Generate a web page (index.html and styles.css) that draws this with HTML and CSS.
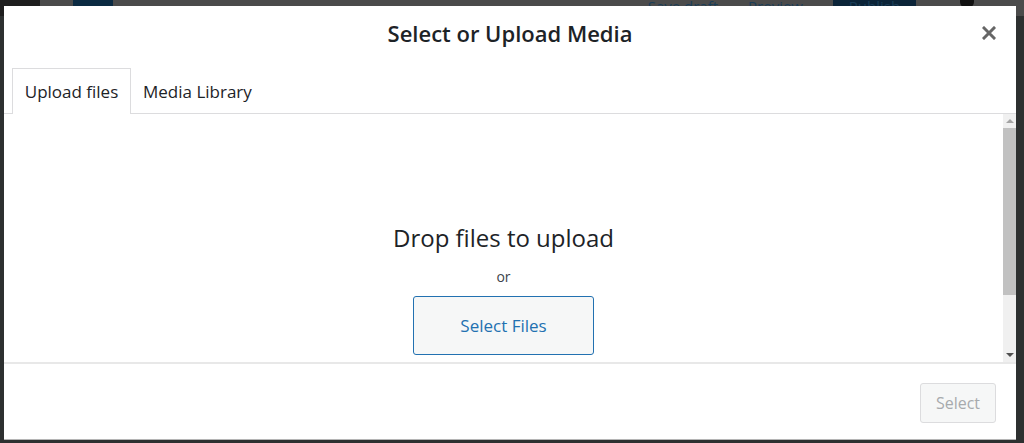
FILE: index.html
```html
<!DOCTYPE html>
<html lang="en">
<head>
<meta charset="utf-8">
<title>Select or Upload Media</title>
<link rel="stylesheet" href="styles.css">
</head>
<body>
<div class="admin-bar">
  <div class="ab-logo"></div>
  <div class="ab-block"></div>
  <div class="ab-spacer"></div>
  <span class="ab-link">Save draft</span>
  <span class="ab-link">Preview</span>
  <span class="ab-publish">Publish</span>
  <span class="ab-gear"></span>
</div>
<div class="modal">
  <div class="modal-title">
    <h1>Select or Upload Media</h1>
    <button class="close" aria-label="Close">
      <svg width="14" height="14" viewBox="0 0 14 14"><path d="M2 2L12 12M12 2L2 12" stroke="#666" stroke-width="3" stroke-linecap="square"/></svg>
    </button>
  </div>
  <div class="tabs">
    <div class="tab active">Upload files</div>
    <div class="tab">Media Library</div>
  </div>
  <div class="content">
    <div class="upload">
      <h2 class="drop">Drop files to upload</h2>
      <p class="or">or</p>
      <button class="select-files">Select Files</button>
    </div>
    <div class="scrollbar">
      <div class="arrow up"></div>
      <div class="thumb"></div>
      <div class="track"></div>
      <div class="arrow down"></div>
    </div>
  </div>
  <div class="footer">
    <button class="select-btn" disabled>Select</button>
  </div>
</div>
</body>
</html>
```
FILE: styles.css
```css
html, body {
  margin: 0;
  height: 100%;
}
body {
  background: #2d3030;
  font-family: "Open Sans", "Noto Sans", sans-serif;
  overflow: hidden;
  position: relative;
}
.admin-bar {
  height: 16px;
  background: #4b4b4b;
  display: flex;
  align-items: flex-start;
  overflow: hidden;
}
.ab-logo {
  width: 40px;
  height: 16px;
  background: #1e1e1e;
}
.ab-block {
  width: 40px;
  height: 16px;
  margin-left: 33px;
  background: #0b2a42;
}
.ab-spacer { flex: 1; }
.ab-link {
  color: #1a3d57;
  font-size: 15px;
  line-height: 12px;
  margin-right: 30px;
}
.ab-publish {
  background: #0b2438;
  color: #1a3d57;
  font-size: 15px;
  line-height: 12px;
  width: 83px;
  height: 16px;
  text-align: center;
  margin-right: 44px;
}
.ab-gear {
  width: 14px;
  height: 8px;
  background: #111;
  border-radius: 0 0 6px 6px;
  margin-right: 50px;
}
.modal {
  position: absolute;
  left: 4px;
  top: 6px;
  width: 1012px;
  height: 433px;
  background: #fff;
  border-bottom: 1px solid #b5b5b5;
  display: flex;
  flex-direction: column;
}
.modal-title {
  height: 62px;
  box-sizing: border-box;
  padding-bottom: 8px;
  display: flex;
  align-items: center;
  justify-content: center;
  position: relative;
}
.modal-title h1 {
  margin: 0;
  font-size: 22px;
  font-weight: 600;
  color: #1d2327;
}
.close {
  position: absolute;
  right: 20px;
  top: 20px;
  width: 14px;
  height: 14px;
  padding: 0;
  border: 0;
  background: none;
  display: flex;
}
.tabs {
  display: flex;
  padding: 0 8px;
  height: 45px;
  border-bottom: 1px solid #dcdcde;
}
.tab {
  font-size: 17px;
  color: #1d2327;
  padding: 0 12px 0 11px;
  display: flex;
  align-items: center;
  border: 1px solid transparent;
  border-bottom: 0;
  margin-bottom: -1px;
}
.tab.active {
  border-color: #dcdcde;
  background: #fff;
  padding: 0;
  width: 117px;
  justify-content: center;
}
.content {
  height: 248px;
  display: flex;
  border-bottom: 2px solid #e8e8e8;
}
.upload {
  flex: 1;
  display: flex;
  flex-direction: column;
  align-items: center;
  padding-top: 107px;
}
.drop {
  margin: 0;
  font-size: 24px;
  font-weight: 400;
  line-height: 34px;
  color: #1d2327;
}
.or {
  margin: 13px 0 0;
  font-size: 14px;
  line-height: 18px;
  color: #3c434a;
}
.select-files {
  margin-top: 10px;
  width: 181px;
  height: 59px;
  border: 1px solid #2271b1;
  border-radius: 3px;
  background: #f6f7f7;
  color: #2271b1;
  font-family: inherit;
  font-size: 17px;
  flex-shrink: 0;
}
.scrollbar {
  width: 13px;
  background: #f0f0f0;
  display: flex;
  flex-direction: column;
}
.arrow {
  height: 14px;
  display: flex;
  align-items: center;
  justify-content: center;
}
.arrow::after {
  content: "";
  border-left: 4px solid transparent;
  border-right: 4px solid transparent;
}
.arrow.up::after { border-bottom: 4px solid #a3a3a3; }
.arrow.down::after { border-top: 4px solid #505050; }
.thumb {
  height: 167px;
  background: #c1c1c1;
}
.track { flex: 1; }
.footer {
  flex: 1;
  display: flex;
  justify-content: flex-end;
  align-items: flex-start;
  padding: 19px 20px 0 0;
}
.select-btn {
  width: 76px;
  height: 40px;
  border: 1px solid #dcdcde;
  border-radius: 3px;
  background: #f6f7f7;
  color: #a7aaad;
  font-family: inherit;
  font-size: 16px;
}
```
